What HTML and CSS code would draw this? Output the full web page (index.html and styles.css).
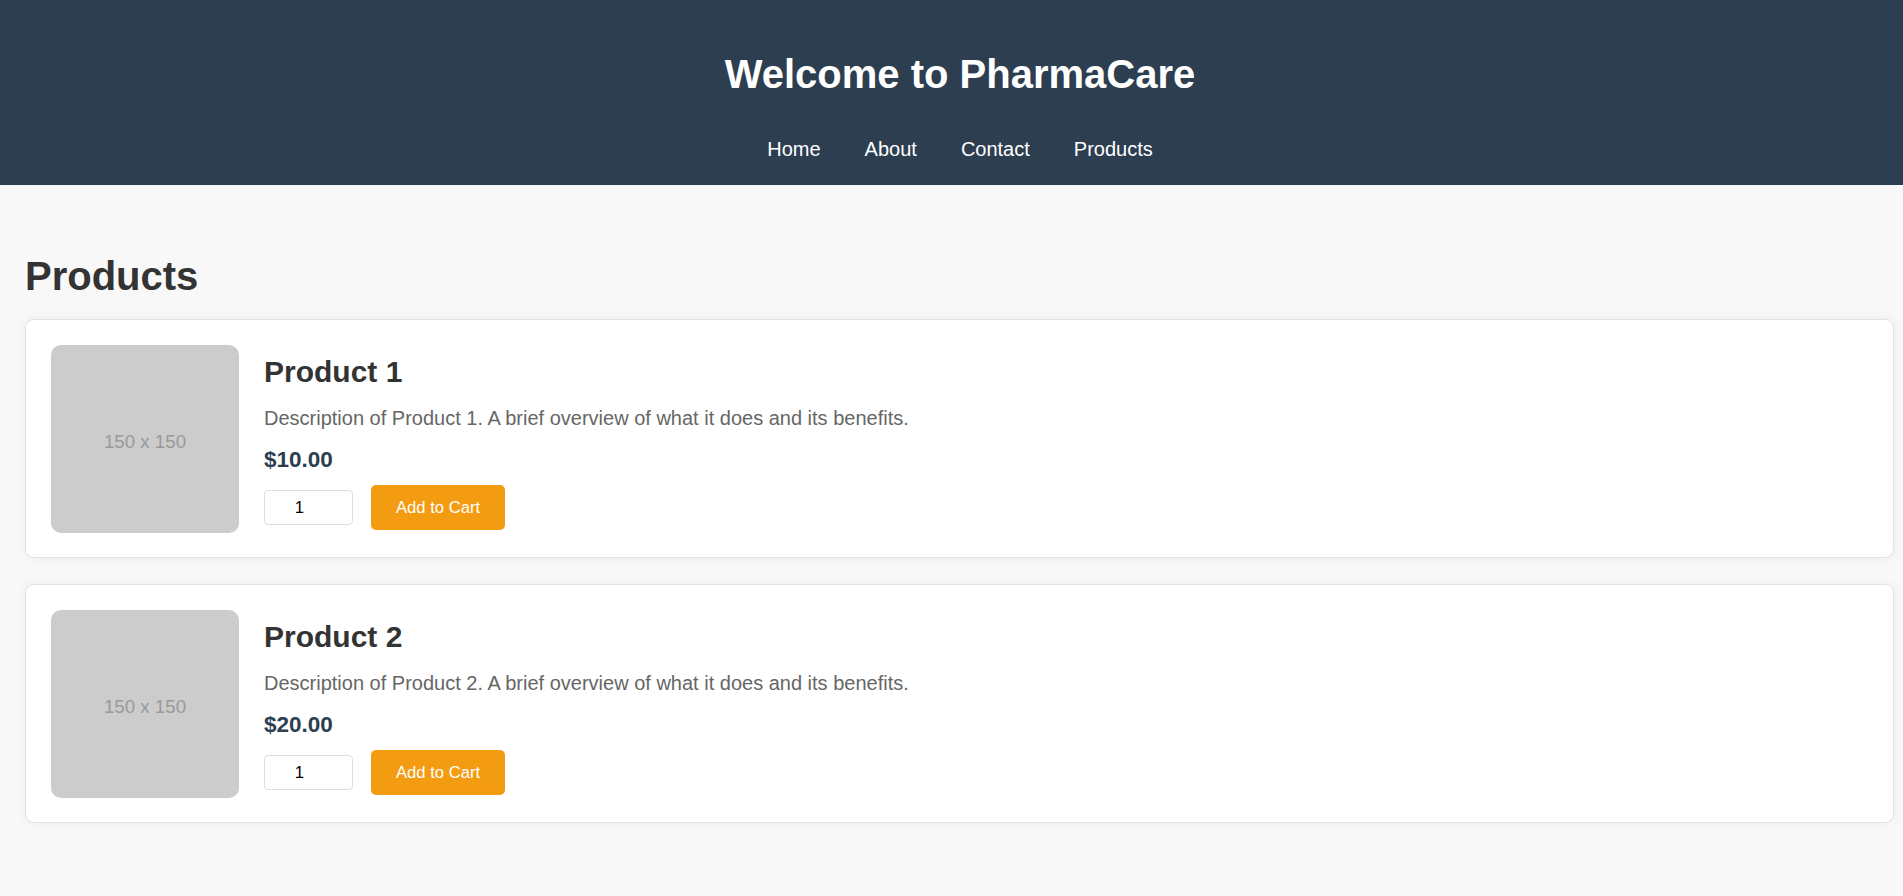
FILE: index.html
```html
<!DOCTYPE html>
<html lang="en">
<head>
<meta charset="utf-8">
<title>PharmaCare</title>
<link rel="stylesheet" href="styles.css">
</head>
<body>
<header class="site-header">
  <h1 class="site-title">Welcome to PharmaCare</h1>
  <nav class="site-nav">
    <a href="#">Home</a>
    <a href="#">About</a>
    <a href="#">Contact</a>
    <a href="#">Products</a>
  </nav>
</header>
<main class="content">
  <h2 class="section-title">Products</h2>
  <div class="product-card">
    <div class="product-image">150 x 150</div>
    <div class="product-info">
      <h3 class="product-name">Product 1</h3>
      <p class="product-desc">Description of Product 1. A brief overview of what it does and its benefits.</p>
      <p class="product-price">$10.00</p>
      <div class="product-actions">
        <input class="qty" type="number" value="1" min="1">
        <button class="add-btn">Add to Cart</button>
      </div>
    </div>
  </div>
  <div class="product-card">
    <div class="product-image">150 x 150</div>
    <div class="product-info">
      <h3 class="product-name">Product 2</h3>
      <p class="product-desc">Description of Product 2. A brief overview of what it does and its benefits.</p>
      <p class="product-price">$20.00</p>
      <div class="product-actions">
        <input class="qty" type="number" value="1" min="1">
        <button class="add-btn">Add to Cart</button>
      </div>
    </div>
  </div>
</main>
</body>
</html>
```
FILE: styles.css
```css
html, body {
  margin: 0;
  padding: 0;
}
body {
  background: #f8f8f8;
  font-family: "Liberation Sans", Arial, sans-serif;
  color: #333;
}
.site-header {
  background: #2c3e50;
  color: #fff;
  padding: 52px 0 24px 17px;
  text-align: center;
}
.site-title {
  margin: 0;
  font-size: 40px;
  line-height: 45px;
  font-weight: bold;
}
.site-nav {
  margin-top: 41px;
  display: flex;
  justify-content: center;
  gap: 44px;
}
.site-nav a {
  color: #fff;
  text-decoration: none;
  font-size: 20px;
  line-height: 23px;
}
.content {
  padding: 69px 9px 40px 25px;
}
.section-title {
  margin: 0 0 20px;
  font-size: 40px;
  line-height: 45px;
  font-weight: bold;
  color: #333;
}
.product-card {
  display: flex;
  align-items: flex-start;
  gap: 25px;
  background: #fff;
  border: 1px solid #e2e2e2;
  border-radius: 9px;
  box-shadow: 0 0 10px rgba(0, 0, 0, 0.06);
  padding: 25px 25px 24px;
  margin-bottom: 26px;
}
.product-image {
  box-sizing: border-box;
  width: 188px;
  height: 188px;
  flex: none;
  background: #cccccc;
  border-radius: 10px;
  color: #999;
  font-size: 18.7px;
  padding-top: 6px;
  display: flex;
  align-items: center;
  justify-content: center;
}
.product-info {
  padding-top: 10px;
}
.product-name {
  margin: 0 0 18px;
  font-size: 30px;
  line-height: 34px;
  font-weight: bold;
  color: #333;
}
.product-desc {
  margin: 0 0 17px;
  font-size: 20px;
  line-height: 23px;
  color: #666;
}
.product-price {
  margin: 0 0 12px;
  font-size: 22.5px;
  line-height: 26px;
  font-weight: bold;
  color: #2c3e50;
}
.product-actions {
  display: flex;
  align-items: center;
  gap: 18px;
}
.qty {
  box-sizing: border-box;
  width: 89px;
  height: 35px;
  border: 1px solid #dddddd;
  border-radius: 4px;
  background: #fff;
  font-family: "Liberation Sans", Arial, sans-serif;
  font-size: 16.67px;
  color: #000;
  text-align: center;
  padding: 0 24px 0 6px;
  -moz-appearance: textfield;
}
.qty::-webkit-outer-spin-button,
.qty::-webkit-inner-spin-button {
  -webkit-appearance: none;
  margin: 0;
}
.add-btn {
  box-sizing: border-box;
  width: 134px;
  height: 45px;
  border: none;
  border-radius: 5px;
  background: #f39c12;
  color: #fff;
  font-family: "Liberation Sans", Arial, sans-serif;
  font-size: 16.67px;
  padding: 0;
  cursor: pointer;
}
```
